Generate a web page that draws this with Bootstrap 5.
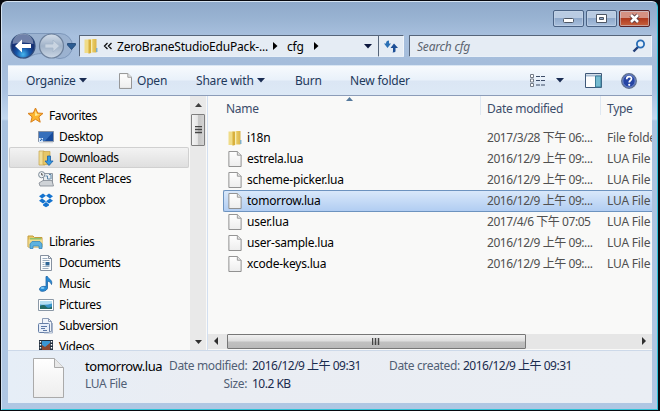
<!DOCTYPE html>
<html lang="en">
<head>
<meta charset="utf-8">
<title>cfg</title>
<link href="https://cdn.jsdelivr.net/npm/bootstrap@5.3.0/dist/css/bootstrap.min.css" rel="stylesheet">
<style>
body{width:660px;height:411px;overflow:hidden;background:#07090f;font-family:"Noto Sans","Noto Sans CJK TC",sans-serif;font-size:12px;line-height:21px;letter-spacing:-.2px;color:#000;white-space:nowrap}
svg{display:block;flex:none}
.win{width:657px;height:409px;margin:1px 0 0 1px;border:1px solid #d5e3f2;border-right-color:#2fc3d8;border-bottom-color:#2fc3d8;border-radius:6px 6px 0 0;background:linear-gradient(#8faacb 0,#9ab4d3 18px,#a8c0de 34px,#a5bddb 60px,#aac2e1 90px,#c3d8ef 117px,#a9c2df 119px,#b0c7e3 100%);padding:0 5px 5px 6px}
.caps{height:33px;padding:8px 2px 0 0;gap:2px}
.capb{width:31px;height:17px;border:1px solid #4a6284;border-radius:2px;background:linear-gradient(#b9cbe2 45%,#8fa9cb 50%,#a9c0dd);box-shadow:inset 0 0 0 1px #c9d8ea88}
.capx{background:linear-gradient(#d59183 45%,#b03a1f 50%,#c7623e);border-color:#5b2327}
.addr{height:22px}
.fld{height:22px;border:1px solid #56657a;border-right-color:#f0f5fb;border-bottom-color:#e8f0f8;background:#e5ecf4;border-radius:1px}
.loc{width:300px}
.path1{margin-left:4px;width:148px}.pa{margin-left:8px}.path2{margin-left:9px;width:18px}.pb{margin-left:9px}
.rf{width:26px;margin-left:-1px;border-left-color:#56657a}
.sr{width:243px;margin-left:5px;padding:0 5px 0 7px;color:#5c6470}
.cmd{height:31px;margin-top:8px;background:linear-gradient(#f7fafd 0,#e9f1fa 48%,#dbe6f4 52%,#dde9f6 100%);border-top:1px solid #d9e6f3;border-bottom:1px solid #8c9cb8;color:#1e395b}
.pane{height:254px;background:#f9f9f8}
.side{width:182px;padding-top:9px;overflow:hidden;letter-spacing:-.37px}
.it{height:21px;padding-left:30px;line-height:21px}
.it.top{padding-left:19px}
.it span{margin-left:5px}
.it.sel{width:180px;margin-left:1px;padding-left:29px;border-radius:2px;background:linear-gradient(#f4f4f4,#dedede);box-shadow:inset 0 0 0 1px #d0d0d0}
.vs{width:16px;background:#e9e9e9;padding-bottom:5px}
.thv{width:14px;height:32px;border:1px solid #7e7e7e;border-radius:1px;background:linear-gradient(90deg,#f3f3f3 0,#e5e5e5 45%,#c4c4c4 55%,#d4d4d4)}
.files{border-left:1px solid #d3dff0;margin-left:1px;overflow:hidden;width:445px}
.hd{height:31px;color:#3c4d6b;letter-spacing:-.3px}
.c1{width:272px;padding-left:18px;line-height:26px}
.c2{width:120px;padding-left:6px;line-height:26px}
.c3{width:52px;padding-left:6px;line-height:26px}
.sep{height:19px;border-left:1px solid #dfe8f2}
.fr{height:21px;margin-left:15px;padding-left:5px;color:#505050}
.fr span{flex:none}
.fr .nm{width:244px;padding-left:4px;color:#000;letter-spacing:-.22px}
.fr .dt{width:120px;letter-spacing:-.44px}
.fr.on{height:22px;margin-bottom:-1px;border:1px solid #6d93bf;border-right:0;border-radius:2px 0 0 2px;background:linear-gradient(#d9e8fa,#b1cdf2);padding-left:4px;line-height:20px}
.hs{height:15px;margin-bottom:1px;background:#e6e6e6}
.thh{width:299px;height:15px;border:1px solid #777;border-radius:1px;background:linear-gradient(#f1f1f1 0,#dedede 45%,#c0c0c0 55%,#b9b9b9)}
.det{height:53px;border-top:1px solid #cdd9e9;background:linear-gradient(90deg,#e6eef7,#eaedf3 30%,#eaeef4);color:#515f75;letter-spacing:-.35px}
.det b{font-weight:400;color:#1a2b4e;letter-spacing:-.5px}
.ln{height:18px;line-height:18px}
.d1,.d2,.d3,.d4,.d5{padding-top:6px}
.d1{margin-left:21px;width:84px}.d2{width:78px}.d3{margin-left:5px;width:137px}.d4{width:68px}.d5{margin-left:6px}
.big{font-size:13px;color:#000;letter-spacing:-.45px}
</style>
<script src="https://cdn.jsdelivr.net/npm/bootstrap@5.3.0/dist/js/bootstrap.bundle.min.js"></script>
</head>
<body>
<svg width="0" height="0" class="position-absolute">
<defs>
<linearGradient id="gp" x2="0" y2="1"><stop stop-color="#fff"/><stop offset="1" stop-color="#ededed"/></linearGradient>
<linearGradient id="gy" x2="1"><stop stop-color="#f6e9a3"/><stop offset=".45" stop-color="#e6c65c"/><stop offset="1" stop-color="#d9b34a"/></linearGradient>
<radialGradient id="gb" cy=".85"><stop stop-color="#45b6ef"/><stop offset=".55" stop-color="#1656a8"/><stop offset="1" stop-color="#173275"/></radialGradient>
<linearGradient id="gg" x2="0" y2="1"><stop stop-color="#d4deea"/><stop offset=".5" stop-color="#a0b2c8"/><stop offset="1" stop-color="#cbd7e5"/></linearGradient>
<symbol id="page" viewBox="0 0 14 17"><path d="M.5.5h9l4 4v12H.5z" fill="url(#gp)" stroke="#8b8b8b"/><path d="M9.500.5v4h4" fill="#e4e4e4" stroke="#999"/></symbol>
<symbol id="fold" viewBox="0 0 14 16"><path d="M.5 1.500h5V15h-5z" fill="#f0dc88"/><path d="M4.500 1.500h2.500V15l-2.500.8z" fill="#d8b03c"/><path d="M7 1h5.500v13.500H7z" fill="url(#gy)"/><path d="M7.500 1v13.500" stroke="#f8edb4"/><path d="M12.800 10v4" stroke="#6aa7cf" stroke-width="1.200"/></symbol>
</defs>
</svg>
<div class="win">
  <div class="caps d-flex justify-content-end">
    <div class="capb"><svg width="29" height="15"><rect x="9.500" y="7.500" width="10" height="4" rx="1" fill="#fff" stroke="#4d5664"/></svg></div>
    <div class="capb"><svg width="29" height="15"><path d="M9.500 3.500h10v8h-10zM12.500 6.500v2h4v-2z" fill="#fff" fill-rule="evenodd" stroke="#4d5664"/></svg></div>
    <div class="capb capx"><svg width="29" height="15"><path d="M11 4l7 7M18 4l-7 7" stroke="#5c3b41" stroke-width="4.400"/><path d="M11 4l7 7M18 4l-7 7" stroke="#fff" stroke-width="2.500"/></svg></div>
  </div>
  <div class="addr d-flex align-items-center">
    <svg width="71" height="28" viewBox="0 0 71 28">
      <path d="M15 1.500h37a12 12 0 0 1 0 25c-7 0-7-5-18-5s-12 5-19 5z" fill="#9bb2d0" stroke="#7e98bb"/>
      <circle cx="15" cy="14" r="12" fill="url(#gb)" stroke="#324d7c" stroke-width="1.200"/>
      <path d="M4.500 12a10.500 10.500 0 0 1 21 0q-10-3-21 0z" fill="#fff" opacity=".38"/>
      <path d="M7 14l7-6.500v4.500h9v4h-9v4.500z" fill="#fff"/>
      <circle cx="43.500" cy="14" r="12" fill="url(#gg)" stroke="#6d819c" stroke-width="1.200"/>
      <path d="M51.500 14L45 8v4h-8v4h8v4z" fill="#c9d4e1" stroke="#a5b6ca" stroke-width=".8"/>
      <path d="M59.500 11.500h8v1.500l-4 4.500-4-4.500z" fill="#2b5c92" stroke="#1e4471" stroke-width=".8"/>
    </svg>
    <div class="fld loc d-flex align-items-center text-black">
      <svg class="ms-1" width="14" height="16"><use href="#fold"/></svg>
      <svg style="margin-left:5px" width="10" height="10"><path d="M4.500 2L1.500 5l3 3M8.500 2l-3 3 3 3" fill="none" stroke="#111" stroke-width="1.300"/></svg>
      <span class="path1">ZeroBraneStudioEduPack-...</span>
      <svg class="pa" width="5" height="8"><path d="M0 0l4.500 4L0 8z" fill="#000"/></svg>
      <span class="path2">cfg</span>
      <svg class="pb" width="5" height="8"><path d="M0 0l4.500 4L0 8z" fill="#000"/></svg>
      <svg class="ms-auto" style="margin-right:6px" width="8" height="5"><path d="M0 0h8L4 4.500z" fill="#0c173d"/></svg>
    </div>
    <div class="fld rf d-flex align-items-center justify-content-center"><svg width="16" height="16" viewBox="0 0 16 16"><path d="M1 5.500l3.500 4.500L8 5.500H6V2.500Q3 2.500 3 5.500z" fill="#2b70b5"/><path d="M7.500 10L11 5.500l4 4.500h-2.500v3.500q-.5 1-3 1l.5-1V10z" fill="#1d4f96"/></svg></div>
    <div class="fld sr d-flex align-items-center"><i>Search cfg</i><svg class="ms-auto" width="14" height="14" viewBox="0 0 14 14"><path d="M6.500 7.500L1.500 12.500" stroke="#233f78" stroke-width="2.400"/><circle cx="8.500" cy="5" r="3.600" fill="#e6f0fa" stroke="#276cb5" stroke-width="1.800"/></svg></div>
  </div>
  <div class="cmd d-flex align-items-center">
    <span style="margin-left:18px;width:53px">Organize</span>
    <svg width="8" height="5"><path d="M0 0h8L4 4.500z" fill="#1a2c52"/></svg>
    <svg style="margin-left:32px" width="13" height="16"><use href="#page"/></svg>
    <span style="margin-left:5px;width:59px">Open</span>
    <span style="width:61px">Share with</span>
    <svg width="8" height="5"><path d="M0 0h8L4 4.500z" fill="#1a2c52"/></svg>
    <span style="margin-left:30px;width:55px">Burn</span>
    <span style="width:60px">New folder</span>
    <svg style="margin-left:120px" width="16" height="14" viewBox="0 0 16 14"><path d="M.5.5h3v3h-3zM.5 5h3v3h-3zM.5 9.500h3v3h-3z" fill="#fff" stroke="#737b87"/><path d="M6 2.500h4M11 2.500h4M6 6.500h4M11 6.500h4M6 11h4M11 11h4" stroke="#3d4c67"/></svg>
    <svg style="margin-left:10px" width="8" height="5"><path d="M0 0h8L4 4.500z" fill="#1a2c52"/></svg>
    <svg style="margin-left:21px" width="17" height="15" viewBox="0 0 17 15"><path d="M.5.5h16v14H.5z" fill="#fdfdfd" stroke="#3f5878"/><path d="M1 2.500h15" stroke="#a9bdd2" stroke-width="2"/><path d="M10.500 3h5.500v11h-5.500z" fill="#76bbd0" stroke="#3c7d98"/></svg>
    <svg style="margin-left:19px" width="16" height="16" viewBox="0 0 16 16"><circle cx="8" cy="8" r="7.300" fill="#2645a4" stroke="#60718e" stroke-width="1.300"/><circle cx="8" cy="8" r="6.200" fill="none" stroke="#a9bce6" stroke-width=".6"/><path d="M5.700 6.300q0-2.600 2.400-2.600t2.400 2.100c0 1.700-2.300 1.700-2.300 3.700" fill="none" stroke="#fff" stroke-width="1.700"/><circle cx="8.200" cy="11.800" r="1.100" fill="#fff"/></svg>
  </div>
  <div class="pane d-flex">
    <div class="side">
      <div class="it top d-flex align-items-center"><svg width="17" height="17" viewBox="0 0 17 17"><path d="M8.500 1l2.200 5 5.300.4-4.100 3.500 1.300 5.300-4.700-2.900-4.700 2.900 1.300-5.300L1 6.400 6.300 6z" fill="#fcb52d" stroke="#d9801c"/><path d="M8.500 3.500L10 7.200l3 .5-5 1.300z" fill="#fff0a0"/></svg><span>Favorites</span></div>
      <div class="it d-flex align-items-center"><svg width="16" height="14" viewBox="0 0 16 14"><path d="M.5 1.500h15v10H.5z" fill="#174b9c" stroke="#8792a4"/><path d="M1 2h14L7 11H1z" fill="#366fbb"/><path d="M1 12.500h14" stroke="#d9dce0" stroke-width="1.500"/><path d="M1 8h4v4H1z" fill="#d9ebff"/><path d="M2 11l2-2M2.500 9H4v1.500" stroke="#2b66b0" fill="none"/></svg><span>Desktop</span></div>
      <div class="it sel d-flex align-items-center"><svg width="16" height="16" viewBox="0 0 16 16"><path d="M1 1h5l1 1v13H1z" fill="#f0de98" stroke="#c5a54c" stroke-width=".7"/><path d="M5 1.500h7v13H5z" fill="#e7c766" stroke="#c9a546" stroke-width=".7"/><path d="M9.500 6h3v5h2.600l-4.100 4.500L7 11h2.500z" fill="#3498df" stroke="#1b5ea9" stroke-width=".8"/></svg><span>Downloads</span></div>
      <div class="it d-flex align-items-center"><svg width="16" height="16" viewBox="0 0 16 16"><path d="M5.500 2.500h9v11h-9z" fill="#e9edf0" stroke="#9099a3"/><path d="M7.500 5h2v3h3M11 3.500h2V8M7 10.500h6" fill="none" stroke="#5c86a8"/><path d="M1 12l4-2.500h9L15.500 15H2z" fill="#cfd3d7" stroke="#818890" stroke-width=".8"/><circle cx="3.700" cy="3.700" r="3.100" fill="#eef2f5" stroke="#7d8a96"/><path d="M3.700 2v2h1.500" fill="none" stroke="#555"/></svg><span>Recent Places</span></div>
      <div class="it d-flex align-items-center"><svg width="16" height="16" viewBox="0 0 16 16" fill="#1473cf"><path d="M5 1.500l3 2.300L4 6.500 1 4.200zM11 1.500l4 2.700-3 2.300-4-2.700zM1 8.800l3-2.300 4 2.700-3 2.300zM12 6.500l3 2.300-4 2.700-3-2.300zM5 12.400l3-2.300 3 2.300v1L8 15.200l-3-1.800z"/></svg><span>Dropbox</span></div>
      <div class="it"></div>
      <div class="it top d-flex align-items-center"><svg width="17" height="16" viewBox="0 0 17 16"><path d="M1 2h5l1.500 1.500H15V13H1z" fill="#e9c966" stroke="#c39c3c"/><path d="M3 4h11v3H3z" fill="#8fc36d"/><path d="M1.500 5.500h14V13h-14z" fill="#f1db8e"/><path d="M3 14.500V10l2-2.500h8l2 2.500v4.500h-3V12H6v2.500z" fill="#5db2df" stroke="#3687bc" stroke-width=".8"/></svg><span>Libraries</span></div>
      <div class="it d-flex align-items-center"><svg width="16" height="16" viewBox="0 0 16 16"><path d="M2.500.5h8l3 3v12h-11z" fill="#fafcfd" stroke="#8691a0"/><path d="M10.500.5v3h3" fill="none" stroke="#8691a0"/><path d="M4.500 3.500h5M4.500 5.500h7M4.500 7.500h2M4.500 9.500h2M4.500 11.500h7M4.500 13.500h6" stroke="#9aacbf"/><path d="M7.500 7h4v3.500h-4z" fill="#2c6495"/></svg><span>Documents</span></div>
      <div class="it d-flex align-items-center"><svg width="16" height="16" viewBox="0 0 16 16"><path d="M8 .5h1.500c.5 2.500 5.500 3 4 8-.7-2.500-2.500-3-4-3.200V12c-.5 3.800-8 4.500-8 1.300 0-2.300 3.500-3.600 6.500-2.600z" fill="#258bd5" stroke="#1c62a5" stroke-width=".8"/><ellipse cx="4.500" cy="12" rx="2" ry="1.100" fill="#7dc8f5"/></svg><span>Music</span></div>
      <div class="it d-flex align-items-center"><svg width="16" height="14" viewBox="0 0 16 14"><path d="M.5 1.500h15v11H.5z" fill="#fff" stroke="#8b98a6"/><path d="M2 3h12v8H2z" fill="#3a95cb"/><path d="M2 3h12v2.500q-6 2-12 1z" fill="#b5def2"/><path d="M2 8q4-2 6 .5t6 0V11H2z" fill="#256a64"/></svg><span>Pictures</span></div>
      <div class="it d-flex align-items-center"><svg width="16" height="16" viewBox="0 0 16 16"><path d="M4.500.5h6l3 3v10h-9z" fill="#f0f4fa" stroke="#8b9bb5"/><path d="M10.500.5v3h3" fill="none" stroke="#8b9bb5"/><rect x=".5" y="5.500" width="11" height="9" rx="1" fill="#e7eef8" stroke="#657ea6"/><path d="M3 8.500h6M3 10.500h4M5 12.500h4" stroke="#5b77a5"/><path d="M14.500 5v10H6" fill="none" stroke="#a3b2ca"/></svg><span>Subversion</span></div>
      <div class="it d-flex align-items-center"><svg width="16" height="16" viewBox="0 0 16 16"><path d="M1 1h14v15H1z" fill="#222f3e"/><path d="M4 2h8v13H4z" fill="#3b96d4"/><path d="M4 6l3 2 5-4v9L8 11l-4 2z" fill="#8c4630"/><path d="M2.500 2v14M13.500 2v14" stroke="#fff" stroke-width="1.400" stroke-dasharray="1.500 1.500"/></svg><span>Videos</span></div>
    </div>
    <div class="vs d-flex flex-column align-items-center">
      <svg width="7" height="18"><path d="M0 11l3.500-4L7 11z" fill="#404040"/></svg>
      <div class="thv d-flex align-items-center justify-content-center"><svg width="7" height="9"><path d="M0 .5h7M0 3.500h7M0 6.500h7" stroke="#444" stroke-width="1.500"/></svg></div>
      <svg class="mt-auto" width="7" height="5"><path d="M0 0h7L3.500 4z" fill="#303030"/></svg>
    </div>
    <div class="files d-flex flex-column">
      <div class="hd d-flex position-relative"><svg class="position-absolute" style="left:138px;top:1px" width="7" height="4"><path d="M0 4l3.500-4L7 4z" fill="#55799c"/></svg><div class="c1">Name</div><div class="c2 sep">Date modified</div><div class="c3 sep">Type</div></div>
      <div class="fr d-flex align-items-center"><svg width="15" height="16"><use href="#fold" width="14" height="16"/></svg><span class="nm">i18n</span><span class="dt">2017/3/28 下午 06:...</span><span>File folder</span></div>
      <div class="fr d-flex align-items-center"><svg width="15" height="16"><use href="#page" width="14" height="16"/></svg><span class="nm">estrela.lua</span><span class="dt">2016/12/9 上午 09:...</span><span>LUA File</span></div>
      <div class="fr d-flex align-items-center"><svg width="15" height="16"><use href="#page" width="14" height="16"/></svg><span class="nm">scheme-picker.lua</span><span class="dt">2016/12/9 上午 09:...</span><span>LUA File</span></div>
      <div class="fr on d-flex align-items-center"><svg width="15" height="16"><use href="#page" width="14" height="16"/></svg><span class="nm">tomorrow.lua</span><span class="dt">2016/12/9 上午 09:...</span><span>LUA File</span></div>
      <div class="fr d-flex align-items-center"><svg width="15" height="16"><use href="#page" width="14" height="16"/></svg><span class="nm">user.lua</span><span class="dt">2017/4/6 下午 07:05</span><span>LUA File</span></div>
      <div class="fr d-flex align-items-center"><svg width="15" height="16"><use href="#page" width="14" height="16"/></svg><span class="nm">user-sample.lua</span><span class="dt">2016/12/9 上午 09:...</span><span>LUA File</span></div>
      <div class="fr d-flex align-items-center"><svg width="15" height="16"><use href="#page" width="14" height="16"/></svg><span class="nm">xcode-keys.lua</span><span class="dt">2016/12/9 上午 09:...</span><span>LUA File</span></div>
      <div class="hs mt-auto d-flex align-items-center">
        <svg width="19" height="9"><path d="M10 0v8L6 4z" fill="#303030"/></svg>
        <div class="thh d-flex align-items-center justify-content-center"><svg width="9" height="7"><path d="M.5 0v7M3.500 0v7M6.500 0v7" stroke="#444" stroke-width="1.500"/></svg></div>
        <svg class="ms-auto" width="11" height="9"><path d="M1 0v8l4-4z" fill="#303030"/></svg>
      </div>
    </div>
  </div>
  <div class="det d-flex">
    <svg style="margin:7px 0 0 25px" width="31" height="40" viewBox="0 0 31 40"><path d="M.5.5h21l9 9v30H.5z" fill="url(#gp)" stroke="#aaa"/><path d="M21.500.5v9h9" fill="#e8e8e8" stroke="#aaa"/></svg>
    <div class="d1"><div class="ln big">tomorrow.lua</div><div class="ln">LUA File</div></div>
    <div class="d2"><div class="ln">Date modified:</div><div class="ln text-end">Size:</div></div>
    <div class="d3"><div class="ln"><b>2016/12/9 上午 09:31</b></div><div class="ln"><b>10.2 KB</b></div></div>
    <div class="d4"><div class="ln">Date created:</div></div>
    <div class="d5"><div class="ln"><b>2016/12/9 上午 09:31</b></div></div>
  </div>
</div>
</body>
</html>
